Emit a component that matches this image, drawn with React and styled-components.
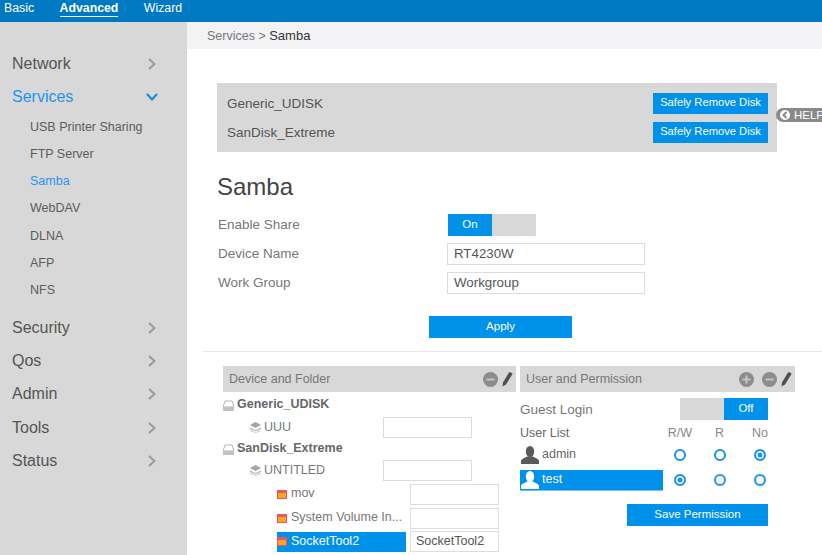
import React from 'react';
import styled, { createGlobalStyle } from 'styled-components';

const menuTop = ['Network'];
const services = ['USB Printer Sharing', 'FTP Server', 'Samba', 'WebDAV', 'DLNA', 'AFP', 'NFS'];
const menuBottom = ['Security', 'Qos', 'Admin', 'Tools', 'Status'];

const tree = [
  { kind: 'disk', name: 'Generic_UDISK', h: 22 },
  { kind: 'share', name: 'UUU', h: 23, input: '' },
  { kind: 'disk', name: 'SanDisk_Extreme', h: 20 },
  { kind: 'share', name: 'UNTITLED', h: 23, input: '' },
  { kind: 'folder', name: 'mov', h: 24, input: '' },
  { kind: 'folder', name: 'System Volume In...', h: 24, input: '' },
  { kind: 'folder', name: 'SocketTool2', h: 23, input: 'SocketTool2', selected: true },
  { kind: 'folder', name: '', h: 24, input: '' },
];

const users = [
  { name: 'admin', perm: 2 },
  { name: 'test', perm: 0, selected: true },
];

function Chevron({ open }) {
  return (
    <ChevronBox $open={open}>
      <svg width="12" height="12" viewBox="0 0 12 12" fill="none" stroke="currentColor" strokeWidth="2">
        {open ? <path d="M1 3 6 8.500 11 3" /> : <path d="M3 1 8.500 6 3 11" />}
      </svg>
    </ChevronBox>
  );
}

function DiskIcon() {
  return (
    <svg width="11" height="11" viewBox="0 0 11 11">
      <path d="M2 1h7l2 6H0z" fill="none" stroke="#b5b5b5" strokeWidth="1" />
      <rect x="0" y="7" width="11" height="4" fill="#c2c2c2" />
    </svg>
  );
}

function ShareIcon() {
  return (
    <svg width="11" height="11" viewBox="0 0 11 11">
      <path d="M5.500 0 11 3 5.500 6 0 3z" fill="#a5a5a5" />
      <path d="M0 5.200 5.500 8 11 5.200V7L5.500 9.500 0 7zM0 8l5.500 2.600L11 8v1L5.500 11 0 9z" fill="#bdbdbd" />
    </svg>
  );
}

function FolderIcon() {
  return (
    <svg width="10" height="9" viewBox="0 0 10 9">
      <rect x="0" y="0" width="10" height="9" fill="#e8556a" />
      <rect x="1" y="3" width="8" height="5" fill="#f7a81d" />
    </svg>
  );
}

function UserIcon({ color }) {
  return (
    <svg width="18" height="18" viewBox="0 0 18 18" fill={color}>
      <ellipse cx="9" cy="5.500" rx="4.200" ry="5.500" />
      <path d="M0 18v-3c0-2 4-3 6-4.500h6c2 1.500 6 2.500 6 4.500v3z" />
    </svg>
  );
}

function Pencil() {
  return (
    <svg width="11" height="15" viewBox="0 0 11 15" fill="#4f4f4f">
      <path d="M7 0.500c1-.7 3.200.3 3.500 1.500L4 12.500 0.500 14.500l.5-4z" />
    </svg>
  );
}

function RoundAction({ plus }) {
  return (
    <svg width="15" height="15" viewBox="0 0 15 15">
      <circle cx="7.500" cy="7.500" r="7.500" fill="#8c8c8c" />
      <path d={plus ? 'M3.500 7.500h8M7.500 3.500v8' : 'M3.500 7.500h8'} stroke="#c4c4c4" strokeWidth="2" />
    </svg>
  );
}

function App() {
  return (
    <Page>
      <GlobalStyle />
      <TopBar>
        <TopTab>Basic</TopTab>
        <TopTab $active>Advanced</TopTab>
        <TopTab>Wizard</TopTab>
      </TopBar>
      <Body>
        <Sidebar>
          {menuTop.map((m) => (
            <MenuItem key={m}>
              {m}
              <Chevron />
            </MenuItem>
          ))}
          <MenuItem $active>
            Services
            <Chevron open />
          </MenuItem>
          <SubMenu>
            {services.map((s) => (
              <SubItem key={s} $active={s === 'Samba'}>
                {s}
              </SubItem>
            ))}
          </SubMenu>
          {menuBottom.map((m) => (
            <MenuItem key={m}>
              {m}
              <Chevron />
            </MenuItem>
          ))}
        </Sidebar>
        <Main>
          <Breadcrumb>
            Services &gt; <b>Samba</b>
          </Breadcrumb>
          <Content>
            <DiskBox>
              <DiskRow>
                Generic_UDISK
                <RemoveButton>Safely Remove Disk</RemoveButton>
              </DiskRow>
              <DiskRow>
                SanDisk_Extreme
                <RemoveButton>Safely Remove Disk</RemoveButton>
              </DiskRow>
            </DiskBox>
            <HelpTab>
              <HelpDot>
                <svg width="6" height="8" viewBox="0 0 6 8" fill="none" stroke="#8a8a8a" strokeWidth="2">
                  <path d="M4.500 1 1.500 4l3 3" />
                </svg>
              </HelpDot>
              HELP
            </HelpTab>
            <Title>Samba</Title>
            <FormRow>
              <FormLabel>Enable Share</FormLabel>
              <Toggle>
                <ToggleSide $on>On</ToggleSide>
                <ToggleSide />
              </Toggle>
            </FormRow>
            <FormRow>
              <FormLabel>Device Name</FormLabel>
              <TextBox>RT4230W</TextBox>
            </FormRow>
            <FormRow>
              <FormLabel>Work Group</FormLabel>
              <TextBox>Workgroup</TextBox>
            </FormRow>
            <ApplyButton>Apply</ApplyButton>
            <Divider />
            <Panels>
              <div>
                <PanelHeader>
                  Device and Folder
                  <PanelActions>
                    <RoundAction />
                    <Pencil />
                  </PanelActions>
                </PanelHeader>
                <Tree>
                  {tree.map((t, i) => (
                    <TreeRow key={i} $h={t.h}>
                      <TreeCell $kind={t.kind} $selected={t.selected}>
                        {t.name && (
                          <>
                            {t.kind === 'disk' && <DiskIcon />}
                            {t.kind === 'share' && <ShareIcon />}
                            {t.kind === 'folder' && <FolderIcon />}
                            <TreeName $kind={t.kind}>{t.name}</TreeName>
                          </>
                        )}
                      </TreeCell>
                      {t.input !== undefined && <ShareInput $kind={t.kind}>{t.input}</ShareInput>}
                    </TreeRow>
                  ))}
                </Tree>
              </div>
              <div>
                <PanelHeader>
                  User and Permission
                  <PanelActions>
                    <PlusSlot>
                      <RoundAction plus />
                    </PlusSlot>
                    <RoundAction />
                    <Pencil />
                  </PanelActions>
                </PanelHeader>
                <GuestRow>
                  Guest Login
                  <Toggle>
                    <ToggleSide />
                    <ToggleSide $on>Off</ToggleSide>
                  </Toggle>
                </GuestRow>
                <PermGrid>
                  <UserListHead>User List</UserListHead>
                  <PermHead>R/W</PermHead>
                  <PermHead>R</PermHead>
                  <PermHead>No</PermHead>
                  {users.map((u) => (
                    <React.Fragment key={u.name}>
                      <UserCell $selected={u.selected}>
                        <UserIcon color={u.selected ? '#fff' : '#5a5a5a'} />
                        <UserName>{u.name}</UserName>
                      </UserCell>
                      {[0, 1, 2].map((p) => (
                        <RadioCell key={p}>
                          <Radio $checked={u.perm === p} />
                        </RadioCell>
                      ))}
                    </React.Fragment>
                  ))}
                </PermGrid>
                <SaveButton>Save Permission</SaveButton>
              </div>
            </Panels>
          </Content>
        </Main>
      </Body>
    </Page>
  );
}

export default App;

const GlobalStyle = createGlobalStyle`
  html, body {
    margin: 0;
    padding: 0;
    overflow: hidden;
    background: #fff;
  }
  * {
    box-sizing: border-box;
  }
`;

const Page = styled.div`
  width: 822px;
  height: 555px;
  overflow: hidden;
  font-family: 'Liberation Sans', Arial, sans-serif;
  color: #666;
`;

const TopBar = styled.div`
  display: flex;
  height: 22px;
  padding-left: 4px;
  gap: 25.500px;
  background: #0079c3;
`;

const TopTab = styled.div`
  height: 16px;
  margin-top: 1px;
  font-size: 12.300px;
  line-height: 15px;
  color: #fff;
  font-weight: ${(p) => (p.$active ? 'bold' : 'normal')};
  border-bottom: ${(p) => (p.$active ? '1px solid #fff' : 'none')};
`;

const Body = styled.div`
  display: flex;
  height: 533px;
`;

const Sidebar = styled.div`
  flex: 0 0 187px;
  padding-top: 25px;
  background: #d8d8d8;
`;

const MenuItem = styled.div`
  display: flex;
  align-items: center;
  justify-content: space-between;
  height: 33.300px;
  padding: 0 29px 0 12px;
  font-size: 16px;
  color: ${(p) => (p.$active ? '#1d94f0' : '#555')};
`;

const ChevronBox = styled.span`
  display: flex;
  color: ${(p) => (p.$open ? '#0a8be0' : '#9a9a9a')};
`;

const SubMenu = styled.div`
  margin-bottom: 6.500px;
`;

const SubItem = styled.div`
  height: 27.300px;
  padding-left: 30px;
  font-size: 12.500px;
  line-height: 27px;
  color: ${(p) => (p.$active ? '#2a96ee' : '#5c5c5c')};
`;

const Main = styled.div`
  flex: 1;
  min-width: 0;
`;

const Breadcrumb = styled.div`
  height: 27px;
  padding-left: 20px;
  font-size: 12.500px;
  line-height: 28px;
  color: #777;
  background: #f3f3f6;

  b {
    font-weight: normal;
    font-size: 13px;
    color: #333;
  }
`;

const Content = styled.div`
  position: relative;
  padding-top: 34px;
`;

const DiskBox = styled.div`
  width: 560px;
  height: 69px;
  margin-left: 30px;
  padding: 10px 9px 0 10px;
  background: #d8d8d8;
`;

const DiskRow = styled.div`
  display: flex;
  align-items: center;
  justify-content: space-between;
  height: 20px;
  margin-bottom: 9.500px;
  font-size: 13.500px;
  color: #555;
`;

const RemoveButton = styled.div`
  flex: none;
  width: 115px;
  height: 21px;
  font-size: 11.200px;
  line-height: 19px;
  text-align: center;
  color: #fff;
  background: #0091ea;
`;

const HelpTab = styled.div`
  position: absolute;
  top: 59px;
  left: 589px;
  display: flex;
  align-items: center;
  gap: 4px;
  width: 60px;
  height: 14px;
  padding-left: 4px;
  font-size: 11.500px;
  color: #fff;
  background: #8a8a8a;
  border-radius: 7px 0 0 7px;
`;

const HelpDot = styled.span`
  display: flex;
  align-items: center;
  justify-content: center;
  width: 10px;
  height: 10px;
  border-radius: 50%;
  background: #fff;
`;

const Title = styled.div`
  margin: 21px 0 9px 30px;
  font-size: 24px;
  line-height: 28px;
  color: #444;
`;

const FormRow = styled.div`
  display: flex;
  align-items: center;
  height: 29px;
  padding-left: 31px;
`;

const FormLabel = styled.div`
  width: 229px;
  margin-top: -1px;
  font-size: 13.500px;
  color: #777;
`;

const Toggle = styled.div`
  display: flex;
  flex: none;
  width: 88px;
  height: 22px;
  margin-left: 1px;
  background: #d8d8d8;
`;

const ToggleSide = styled.div`
  width: 44px;
  font-size: 11.500px;
  line-height: 21px;
  text-align: center;
  color: #fff;
  background: ${(p) => (p.$on ? '#0091ea' : 'transparent')};
`;

const TextBox = styled.div`
  width: 198px;
  height: 22px;
  padding-left: 6px;
  font-size: 13.300px;
  line-height: 19px;
  color: #555;
  border: 1px solid #dcdcdc;
`;

const ApplyButton = styled.div`
  width: 143px;
  height: 22px;
  margin: 19px 0 0 242px;
  font-size: 11.500px;
  line-height: 21px;
  text-align: center;
  color: #fff;
  background: #0091ea;
`;

const Divider = styled.div`
  height: 1px;
  margin: 13px 0 14px 16px;
  background: #e8e8e8;
`;

const Panels = styled.div`
  display: grid;
  grid-template-columns: 293px 275px;
  column-gap: 4px;
  margin-left: 36px;
`;

const PanelHeader = styled.div`
  display: flex;
  align-items: center;
  justify-content: space-between;
  height: 26px;
  padding: 0 3px 0 6px;
  font-size: 12.500px;
  color: #777;
  background: #d8d8d8;
`;

const PanelActions = styled.div`
  display: flex;
  align-items: center;
  gap: 4px;
`;

const PlusSlot = styled.span`
  display: flex;
  margin-right: 4px;
`;

const Tree = styled.div`
  width: 276px;
  padding-top: 2px;
`;

const TreeRow = styled.div`
  display: flex;
  align-items: center;
  height: ${(p) => p.$h}px;
`;

const levelPad = { disk: 0, share: 27, folder: 54 };

const TreeCell = styled.div`
  display: flex;
  align-items: center;
  flex: none;
  gap: ${(p) => (p.$kind === 'folder' ? '4px' : '3px')};
  margin-left: ${(p) => levelPad[p.$kind]}px;
  width: ${(p) => (p.$kind === 'folder' ? '129px' : 'auto')};
  height: 20px;
  color: ${(p) => (p.$selected ? '#fff' : '#777')};
  background: ${(p) => (p.$selected ? '#0091ea' : 'transparent')};
`;

const TreeName = styled.span`
  margin-top: -2px;
  font-size: 12.500px;
  font-weight: ${(p) => (p.$kind === 'disk' ? 'bold' : 'normal')};
  color: ${(p) => (p.$kind === 'disk' ? '#666' : 'inherit')};
  white-space: nowrap;
`;

const ShareInput = styled.div`
  flex: none;
  width: 89px;
  height: 21px;
  margin-left: auto;
  margin-right: ${(p) => (p.$kind === 'folder' ? '0' : '27px')};
  padding-left: 5px;
  font-size: 12.500px;
  line-height: 19px;
  color: #555;
  background: #fff;
  border: 1px solid #dcdcdc;
`;

const GuestRow = styled.div`
  display: flex;
  align-items: center;
  justify-content: space-between;
  width: 248px;
  height: 22px;
  margin-top: 6px;
  font-size: 13.500px;
  color: #777;
`;

const PermGrid = styled.div`
  display: grid;
  grid-template-columns: 143px 34px 45px 36px;
  grid-template-rows: 22px 21px 30px;
  margin-top: 2px;
  align-items: center;
`;

const UserListHead = styled.div`
  font-size: 12.500px;
  color: #666;
`;

const PermHead = styled.div`
  font-size: 12.500px;
  text-align: center;
  color: #888;
`;

const UserCell = styled.div`
  display: flex;
  align-items: center;
  gap: 3px;
  height: 21px;
  padding-left: 1px;
  font-size: 12.500px;
  color: ${(p) => (p.$selected ? '#fff' : '#666')};
  background: ${(p) => (p.$selected ? '#0091ea' : 'transparent')};
  border-bottom: ${(p) => (p.$selected ? '1px solid #7cc0f0' : 'none')};
`;

const UserName = styled.span`
  margin-top: -2px;
`;

const RadioCell = styled.div`
  display: flex;
  justify-content: center;
`;

const Radio = styled.span`
  display: block;
  width: 12px;
  height: 12px;
  border: 2px solid #1c93e8;
  border-radius: 50%;
  background: ${(p) => (p.$checked ? '#1c93e8' : '#fff')};
  box-shadow: ${(p) => (p.$checked ? 'inset 0 0 0 1.500px #fff' : 'none')};
`;

const SaveButton = styled.div`
  width: 141px;
  height: 22px;
  margin: 9px 0 0 107px;
  font-size: 11.500px;
  line-height: 21px;
  text-align: center;
  color: #fff;
  background: #0091ea;
`;
